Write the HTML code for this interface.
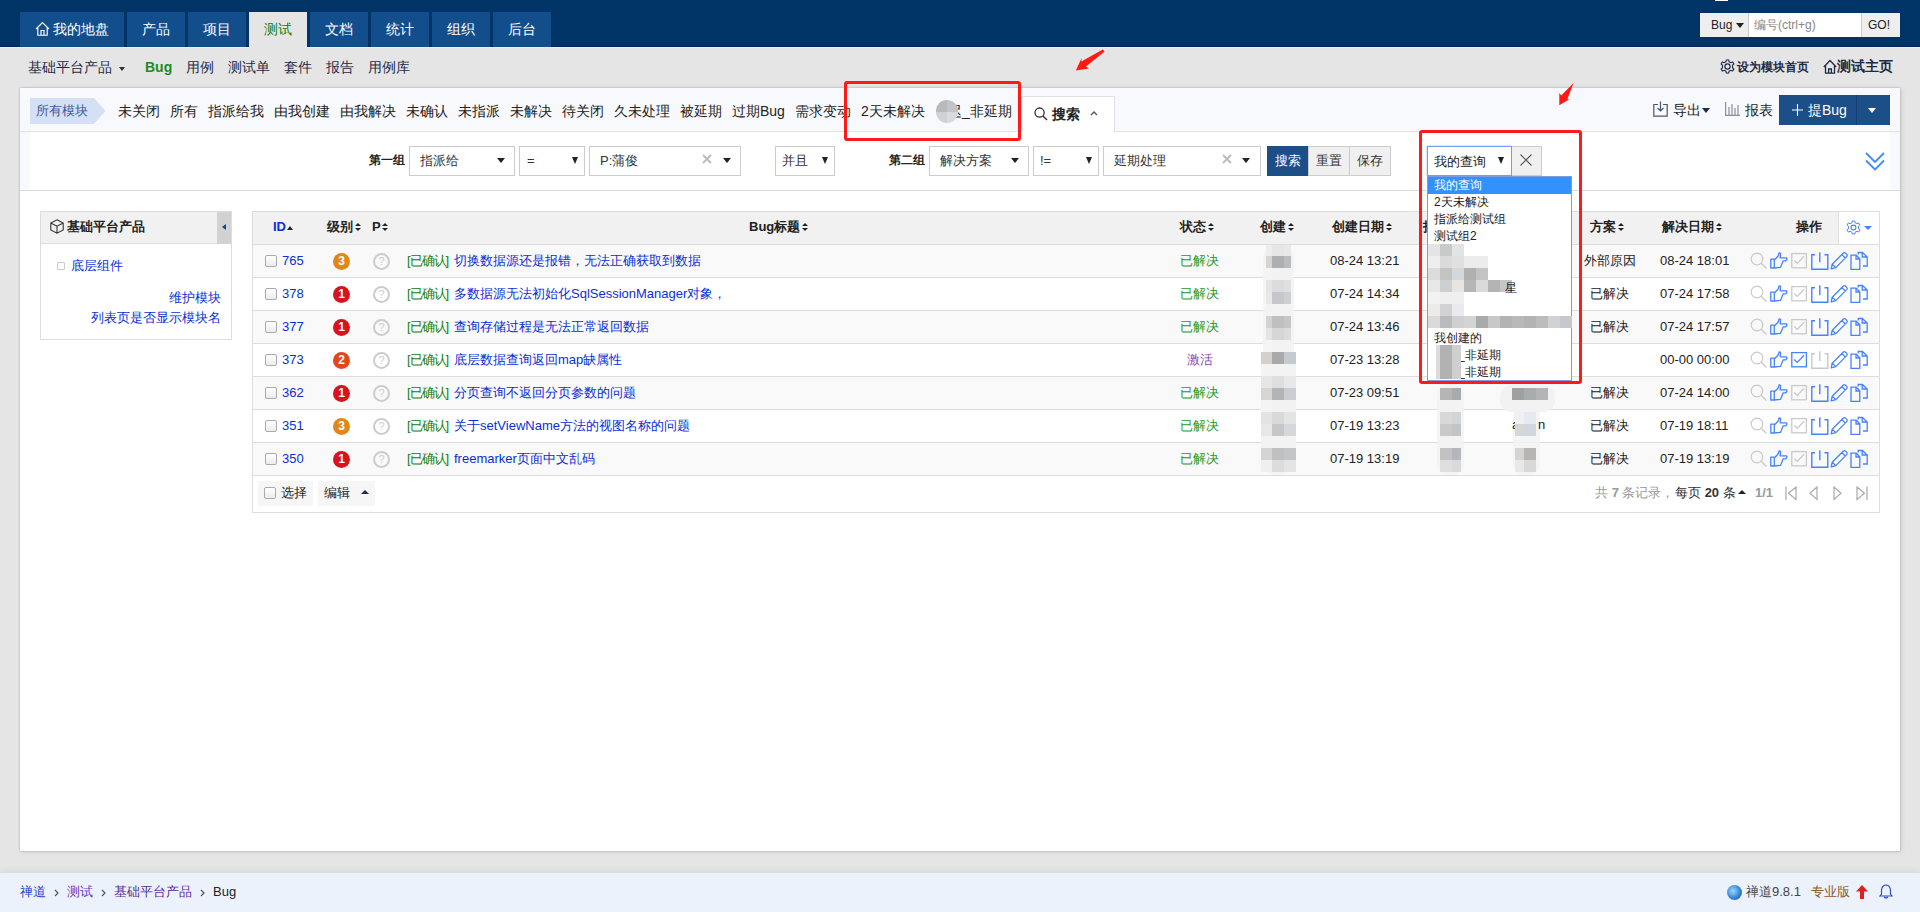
<!DOCTYPE html><html><head><meta charset="utf-8"><title>Bug</title><style>
*{box-sizing:border-box;margin:0;padding:0}
html,body{width:1920px;height:912px;overflow:hidden}
body{position:relative;background:#e5e5e5;font-family:"Liberation Sans",sans-serif;font-size:13px;color:#333;line-height:1}
.a{position:absolute;white-space:nowrap}
svg{position:absolute;overflow:visible}
#hdr{position:absolute;left:0;top:0;width:1920px;height:47px;background:#003366}
.tab{position:absolute;top:12px;height:35px;width:58px;background:#134e8c;color:#fff;font-size:14px;line-height:35px;text-align:center}
.tab.on{background:#e5e5e5;color:#127c12}
.sub{font-size:14px;line-height:16px;top:59px;color:#1e2a44}
#panel{position:absolute;left:20px;top:88px;width:1880px;height:763px;background:#fff;box-shadow:0 0 2px rgba(0,0,0,.3),2px 1px 5px rgba(0,0,0,.07)}
#fbar{position:absolute;left:0;top:0;width:1880px;height:44px;background:#f8f9fd;border-bottom:1px solid #e1e1e1}
#sform{position:absolute;left:0;top:44px;width:1880px;height:59px;background:#f8f9fd;border-bottom:1px solid #dcdcdc}
#sform .in{position:absolute;left:10px;top:0;width:1860px;height:58px;background:#fff}
.flt{font-size:14px;line-height:16px;top:103px;color:#222}
.sel{position:absolute;top:146px;height:30px;border:1px solid #ccc;background:#fff;font-size:13px;line-height:27px;color:#333;padding-left:10px}
.car{position:absolute;width:0;height:0;border-left:5px solid transparent;border-right:5px solid transparent;border-top:5px solid #222}
.lbl{font-size:12px;line-height:16px;top:152px;font-weight:bold;color:#222}
.btn{position:absolute;top:146px;height:30px;font-size:13px;line-height:28px;text-align:center;border:1px solid #ccc;background:#f0f0f0;color:#333}
#ftr{position:absolute;left:0;top:873px;width:1920px;height:39px;background:#ecf2fc;box-shadow:0 -2px 6px rgba(0,0,0,.06)}
.th{font-size:13px;line-height:16px;font-weight:bold;color:#222}
.td{font-size:13px;line-height:16px;color:#333}
.row{position:absolute;left:253px;width:1626px;height:33px;border-bottom:1px solid #ddd}
.cb{position:absolute;width:12px;height:12px;border:1px solid #aaa;border-radius:2px;background:linear-gradient(#fff,#ececec)}
.sev{position:absolute;width:17px;height:17px;border-radius:50%;color:#fff;font-size:12px;font-weight:bold;line-height:17px;text-align:center}
.pq{position:absolute;width:17px;height:17px;border-radius:50%;border:2px solid #ccc;color:#ccc;font-size:11px;line-height:13px;text-align:center}
.blk{position:absolute;background:#c8c8c8}
.red{position:absolute;border:3px solid #ff1a1a;border-radius:3px}
</style></head><body>
<div id="hdr">
<div class="a" style="left:0;top:46px;width:1920px;height:1px;background:#00265c"></div>
<div class="tab" style="left:20px;width:104px;text-align:left;padding-left:33px">我的地盘</div>
<svg style="left:35px;top:21px" width="15" height="15" viewBox="0 0 15 15"><path d="M1 8 L7.5 1.5 L14 8 M2.8 6.5 V14.2 H12.2 V6.5 M6 14.2 V9.5 H9 V14.2" fill="none" stroke="#fff" stroke-width="1.15"/></svg>
<div class="tab" style="left:127px">产品</div>
<div class="tab" style="left:188px">项目</div>
<div class="tab on" style="left:249px">测试</div>
<div class="tab" style="left:310px">文档</div>
<div class="tab" style="left:371px">统计</div>
<div class="tab" style="left:432px">组织</div>
<div class="tab" style="left:493px">后台</div>
<div class="a" style="left:1700px;top:13px;width:200px;height:24px;background:#fff"></div>
<div class="a" style="left:1700px;top:13px;width:49px;height:24px;background:#eee;border-right:1px solid #ccc;font-size:12px;line-height:24px;color:#222;padding-left:11px">Bug</div>
<div class="car" style="left:1736px;top:23px;border-left-width:4px;border-right-width:4px;border-top-width:5px"></div>
<div class="a" style="left:1754px;top:13px;font-size:12px;line-height:24px;color:#888">编号(ctrl+g)</div>
<div class="a" style="left:1861px;top:13px;width:39px;height:24px;background:#eee;border-left:1px solid #ccc;font-size:12px;line-height:24px;color:#222;padding-left:6px">GO!</div>
<div class="a" style="left:1715px;top:0;width:13px;height:1px;background:#fff"></div>
</div>
<div class="a" style="left:0;top:47px;width:249px;height:1px;background:#f0eeeb"></div><div class="a" style="left:307px;top:47px;width:1613px;height:1px;background:#f0eeeb"></div>
<div class="a sub" style="left:28px">基础平台产品</div>
<div class="a sub" style="left:186px">用例</div>
<div class="a sub" style="left:228px">测试单</div>
<div class="a sub" style="left:284px">套件</div>
<div class="a sub" style="left:326px">报告</div>
<div class="a sub" style="left:368px">用例库</div>
<div class="car" style="left:119px;top:67px;border-left-width:3.5px;border-right-width:3.5px;border-top-width:4px;border-top-color:#333"></div>
<div class="a sub" style="left:145px;color:#1e8c1e;font-weight:bold;font-size:14px">Bug</div>
<svg style="left:1720px;top:59px" width="15" height="15" viewBox="0 0 15 15"><circle cx="7.5" cy="7.5" r="2.6" fill="none" stroke="#1e2a44" stroke-width="1.2"/><path d="M6.3 1 H8.7 L9.1 2.8 L10.9 3.7 L12.6 2.9 L13.9 4.9 L12.5 6.3 V8.7 L13.9 10.1 L12.6 12.1 L10.9 11.3 L9.1 12.2 L8.7 14 H6.3 L5.9 12.2 L4.1 11.3 L2.4 12.1 L1.1 10.1 L2.5 8.7 V6.3 L1.1 4.9 L2.4 2.9 L4.1 3.7 L5.9 2.8 Z" fill="none" stroke="#1e2a44" stroke-width="1.1"/></svg>
<div class="a sub" style="left:1737px;font-size:12px;font-weight:bold">设为模块首页</div>
<svg style="left:1823px;top:59px" width="14" height="15" viewBox="0 0 14 15"><path d="M0.8 8 L7 1.5 L13.2 8 M2.5 6.5 V14.2 H11.5 V6.5 M5.6 14.2 V10 H8.4 V14.2" fill="none" stroke="#1e2a44" stroke-width="1.3"/></svg>
<div class="a sub" style="left:1837px;font-size:13.5px;font-weight:bold">测试主页</div>
<div id="panel"><div id="fbar"></div><div id="sform"><div class="in"></div></div></div>
<svg style="left:30px;top:98px" width="76" height="26" viewBox="0 0 76 26"><path d="M0 0 H64 L75.5 13 L64 26 H0 Z" fill="#d4e0f6"/></svg>
<div class="a" style="left:36px;top:103px;font-size:13px;line-height:16px;color:#3b5998">所有模块</div>
<div class="a flt" style="left:118px">未关闭</div>
<div class="a flt" style="left:170px">所有</div>
<div class="a flt" style="left:208px">指派给我</div>
<div class="a flt" style="left:274px">由我创建</div>
<div class="a flt" style="left:340px">由我解决</div>
<div class="a flt" style="left:406px">未确认</div>
<div class="a flt" style="left:458px">未指派</div>
<div class="a flt" style="left:510px">未解决</div>
<div class="a flt" style="left:562px">待关闭</div>
<div class="a flt" style="left:614px">久未处理</div>
<div class="a flt" style="left:680px">被延期</div>
<div class="a flt" style="left:732px">过期Bug</div>
<div class="a flt" style="left:795px">需求变动</div>
<div class="a flt" style="left:861px">2天未解决</div>
<div class="a flt" style="left:948px">迟_非延期</div>
<div class="a" style="left:936px;top:100px;width:22px;height:23px;border-radius:11px;overflow:hidden;filter:blur(0.4px)"><div class="a" style="left:0;top:0;width:11px;height:12px;background:#b9b9b9"></div><div class="a" style="left:11px;top:0;width:11px;height:12px;background:#c4c4c6"></div><div class="a" style="left:0;top:12px;width:11px;height:11px;background:#cfd1d3"></div><div class="a" style="left:11px;top:12px;width:11px;height:11px;background:#d9d9dc"></div></div>
<div class="a" style="left:1021px;top:96px;width:94px;height:36px;background:#fff;border:1px solid #e1e1e1;border-bottom:none"></div>
<svg style="left:1034px;top:107px" width="14" height="14" viewBox="0 0 14 14"><circle cx="5.6" cy="5.6" r="4.6" fill="none" stroke="#333" stroke-width="1.3"/><path d="M9 9 L13 13" stroke="#333" stroke-width="1.4"/></svg>
<div class="a" style="left:1052px;top:106px;font-size:14px;line-height:16px;font-weight:bold;color:#222">搜索</div>
<svg style="left:1090px;top:110px" width="8" height="6" viewBox="0 0 8 6"><path d="M1 5 L4 2 L7 5" fill="none" stroke="#555" stroke-width="1.4"/></svg>
<svg style="left:1653px;top:101px" width="15" height="16" viewBox="0 0 15 16"><path d="M5 3.5 H0.8 V15.2 H14.2 V3.5 H10 M7.5 0.5 V10 M4.5 7 L7.5 10 L10.5 7" fill="none" stroke="#4a5670" stroke-width="1.2"/></svg>
<div class="a" style="left:1673px;top:102px;font-size:14px;line-height:16px;color:#222">导出</div>
<div class="car" style="left:1702px;top:108px;border-left-width:4px;border-right-width:4px;border-top-width:5px;border-top-color:#1e2a50"></div>
<svg style="left:1725px;top:102px" width="15" height="14" viewBox="0 0 15 14"><path d="M0.6 0 V13.4 H15 M4 5 V13 M7 2 V13 M10 6 V13 M13 3 V13" fill="none" stroke="#8a8fa0" stroke-width="1.2"/></svg>
<div class="a" style="left:1745px;top:102px;font-size:14px;line-height:16px;color:#222">报表</div>
<div class="a" style="left:1779px;top:95px;width:111px;height:30px;background:#1c4e87"></div>
<div class="a" style="left:1856px;top:95px;width:1px;height:30px;background:#143e70"></div>
<svg style="left:1792px;top:104px" width="11" height="12" viewBox="0 0 11 12"><path d="M5.5 0 V12 M0 6 H11" stroke="#fff" stroke-width="1.1"/></svg>
<div class="a" style="left:1808px;top:102px;font-size:14px;line-height:16px;color:#fff">提Bug</div>
<div class="car" style="left:1868px;top:108px;border-left-width:4.5px;border-right-width:4.5px;border-top-width:5px;border-top-color:#fff"></div>
<div class="a lbl" style="left:369px">第一组</div>
<div class="sel" style="left:409px;width:106px">指派给</div><div class="car" style="left:497px;top:158px;border-left-width:4.5px;border-right-width:4.5px;border-top-width:5px"></div>
<div class="sel" style="left:519px;width:66px;padding-left:7px">=</div><div class="car" style="left:572px;top:157px;border-left-width:3.5px;border-right-width:3.5px;border-top-width:7px"></div>
<div class="sel" style="left:589px;width:152px">P:蒲俊</div>
<svg style="left:702px;top:154px" width="10" height="10" viewBox="0 0 10 10"><path d="M1 1 L9 9 M9 1 L1 9" stroke="#bbb" stroke-width="1.8"/></svg>
<div class="car" style="left:723px;top:158px;border-left-width:4.5px;border-right-width:4.5px;border-top-width:5px"></div>
<div class="sel" style="left:775px;width:60px;padding-left:6px">并且</div><div class="car" style="left:822px;top:157px;border-left-width:3.5px;border-right-width:3.5px;border-top-width:7px"></div>
<div class="a lbl" style="left:889px">第二组</div>
<div class="sel" style="left:929px;width:100px">解决方案</div><div class="car" style="left:1011px;top:158px;border-left-width:4.5px;border-right-width:4.5px;border-top-width:5px"></div>
<div class="sel" style="left:1033px;width:66px;padding-left:6px">!=</div><div class="car" style="left:1086px;top:157px;border-left-width:3.5px;border-right-width:3.5px;border-top-width:7px"></div>
<div class="sel" style="left:1103px;width:158px">延期处理</div>
<svg style="left:1222px;top:154px" width="10" height="10" viewBox="0 0 10 10"><path d="M1 1 L9 9 M9 1 L1 9" stroke="#bbb" stroke-width="1.8"/></svg>
<div class="car" style="left:1242px;top:158px;border-left-width:4.5px;border-right-width:4.5px;border-top-width:5px"></div>
<div class="btn" style="left:1267px;width:41px;background:#1c4e87;border-color:#1c4e87;color:#fff">搜索</div>
<div class="btn" style="left:1308px;width:42px">重置</div>
<div class="btn" style="left:1349px;width:42px">保存</div>
<svg style="left:1865px;top:152px" width="20" height="19" viewBox="0 0 20 19"><path d="M1 1 L10 10 L19 1 M1 8.5 L10 17.5 L19 8.5" fill="none" stroke="#3d8bff" stroke-width="1.8"/></svg>
<div class="a" style="left:40px;top:211px;width:192px;height:129px;border:1px solid #ddd;background:#fff"></div>
<div class="a" style="left:41px;top:212px;width:190px;height:32px;background:#f1f1f1;border-bottom:1px solid #ddd"></div>
<div class="a" style="left:217px;top:212px;width:14px;height:32px;background:#d2d2d2"></div>
<div class="car" style="left:222px;top:224px;border:none;border-top:3.5px solid transparent;border-bottom:3.5px solid transparent;border-right:4px solid #1f3aa0"></div>
<svg style="left:50px;top:219px" width="14" height="15" viewBox="0 0 14 15"><path d="M7 0.8 L13.2 4 V11 L7 14.2 L0.8 11 V4 Z M0.8 4 L7 7.2 L13.2 4 M7 7.2 V14.2" fill="none" stroke="#333" stroke-width="1.1"/></svg>
<div class="a th" style="left:67px;top:219px">基础平台产品</div>
<div class="a" style="left:57px;top:262px;width:8px;height:8px;border:1px solid #ccc;border-radius:1px"></div>
<div class="a td" style="left:71px;top:258px;color:#0a2ed6">底层组件</div>
<div class="a td" style="left:169px;top:290px;color:#0a2ed6">维护模块</div>
<div class="a td" style="left:91px;top:310px;color:#0a2ed6">列表页是否显示模块名</div>
<div class="a" style="left:252px;top:211px;width:1628px;height:302px;border:1px solid #ddd;background:#fff"></div>
<div class="a" style="left:253px;top:212px;width:1585px;height:32px;background:#f1f1f1"></div>
<div class="a" style="left:1838px;top:212px;width:1px;height:32px;background:#ddd"></div>
<div class="a" style="left:253px;top:244px;width:1626px;height:1px;background:#ddd"></div>
<div class="a th" style="left:273px;top:219px;color:#0a2ed6">ID</div><div class="car" style="left:287px;top:226px;border:none;border-left:3px solid transparent;border-right:3px solid transparent;border-bottom:4px solid #222"></div>
<div class="a th" style="left:327px;top:219px">级别</div><div class="car" style="left:355px;top:223px;border:none;border-left:3px solid transparent;border-right:3px solid transparent;border-bottom:3.5px solid #222"></div><div class="car" style="left:355px;top:228px;border:none;border-left:3px solid transparent;border-right:3px solid transparent;border-top:3.5px solid #222"></div>
<div class="a th" style="left:372px;top:219px">P</div><div class="car" style="left:382px;top:223px;border:none;border-left:3px solid transparent;border-right:3px solid transparent;border-bottom:3.5px solid #222"></div><div class="car" style="left:382px;top:228px;border:none;border-left:3px solid transparent;border-right:3px solid transparent;border-top:3.5px solid #222"></div>
<div class="a th" style="left:749px;top:219px">Bug标题</div><div class="car" style="left:802px;top:223px;border:none;border-left:3px solid transparent;border-right:3px solid transparent;border-bottom:3.5px solid #222"></div><div class="car" style="left:802px;top:228px;border:none;border-left:3px solid transparent;border-right:3px solid transparent;border-top:3.5px solid #222"></div>
<div class="a th" style="left:1180px;top:219px">状态</div><div class="car" style="left:1208px;top:223px;border:none;border-left:3px solid transparent;border-right:3px solid transparent;border-bottom:3.5px solid #222"></div><div class="car" style="left:1208px;top:228px;border:none;border-left:3px solid transparent;border-right:3px solid transparent;border-top:3.5px solid #222"></div>
<div class="a th" style="left:1260px;top:219px">创建</div><div class="car" style="left:1288px;top:223px;border:none;border-left:3px solid transparent;border-right:3px solid transparent;border-bottom:3.5px solid #222"></div><div class="car" style="left:1288px;top:228px;border:none;border-left:3px solid transparent;border-right:3px solid transparent;border-top:3.5px solid #222"></div>
<div class="a th" style="left:1332px;top:219px">创建日期</div><div class="car" style="left:1386px;top:223px;border:none;border-left:3px solid transparent;border-right:3px solid transparent;border-bottom:3.5px solid #222"></div><div class="car" style="left:1386px;top:228px;border:none;border-left:3px solid transparent;border-right:3px solid transparent;border-top:3.5px solid #222"></div>
<div class="a th" style="left:1423px;top:219px">指派</div>
<div class="a th" style="left:1590px;top:219px">方案</div><div class="car" style="left:1618px;top:223px;border:none;border-left:3px solid transparent;border-right:3px solid transparent;border-bottom:3.5px solid #222"></div><div class="car" style="left:1618px;top:228px;border:none;border-left:3px solid transparent;border-right:3px solid transparent;border-top:3.5px solid #222"></div>
<div class="a th" style="left:1662px;top:219px">解决日期</div><div class="car" style="left:1716px;top:223px;border:none;border-left:3px solid transparent;border-right:3px solid transparent;border-bottom:3.5px solid #222"></div><div class="car" style="left:1716px;top:228px;border:none;border-left:3px solid transparent;border-right:3px solid transparent;border-top:3.5px solid #222"></div>
<div class="a th" style="left:1796px;top:219px">操作</div>
<svg style="left:1846px;top:220px" width="15" height="15" viewBox="0 0 15 15"><circle cx="7.5" cy="7.5" r="2.4" fill="none" stroke="#4682fa" stroke-width="1.1"/><path d="M6.3 1 H8.7 L9.1 2.8 L10.9 3.7 L12.6 2.9 L13.9 4.9 L12.5 6.3 V8.7 L13.9 10.1 L12.6 12.1 L10.9 11.3 L9.1 12.2 L8.7 14 H6.3 L5.9 12.2 L4.1 11.3 L2.4 12.1 L1.1 10.1 L2.5 8.7 V6.3 L1.1 4.9 L2.4 2.9 L4.1 3.7 L5.9 2.8 Z" fill="none" stroke="#4682fa" stroke-width="1"/></svg>
<div class="car" style="left:1864px;top:226px;border-left-width:4px;border-right-width:4px;border-top-width:4px;border-top-color:#4682fa"></div>
<div class="a" style="left:253px;top:245px;width:1626px;height:32px;background:#f9f9f9"></div>
<div class="a" style="left:253px;top:277px;width:1626px;height:1px;background:#ddd"></div>
<div class="cb" style="left:265px;top:255px"></div>
<div class="a td" style="left:282px;top:253px;color:#0a2ed6">765</div>
<div class="sev" style="left:333px;top:253px;background:#e0861a">3</div>
<div class="pq" style="left:373px;top:253px">?</div>
<div class="a td" style="left:407px;top:253px;color:#0f800f;letter-spacing:-1px">[已确认]</div>
<div class="a td" style="left:454px;top:253px;color:#0a2ed6">切换数据源还是报错，无法正确获取到数据</div>
<div class="a td" style="left:1180px;top:253px;color:#1f9a1f">已解决</div>
<div class="a td" style="left:1330px;top:253px;color:#222">08-24 13:21</div>
<div class="a td" style="left:1584px;top:253px;color:#222">外部原因</div>
<div class="a td" style="left:1660px;top:253px;color:#222">08-24 18:01</div>
<svg style="left:1750px;top:252px" width="18" height="18" viewBox="0 0 18 18"><circle cx="7" cy="7" r="5.8" fill="none" stroke="#c9c9c9" stroke-width="1.2"/><path d="M11.2 11.2 L16.5 16.5" stroke="#c9c9c9" stroke-width="1.3"/></svg><svg style="left:1770px;top:252px" width="18" height="18" viewBox="0 0 18 18"><path d="M0.8 7.2 H4.3 V16 H0.8 Z M4.3 8 L8 4.2 L9.2 0.8 L10.6 1.4 L10.2 5.8 H16.5 L17 7.2 L15.8 8.8 H13.2 L12.2 11.2 L11.4 13.2 L10.4 15.4 L4.3 16" fill="none" stroke="#4682fa" stroke-width="1.3" stroke-linejoin="round"/></svg><svg style="left:1791px;top:252px" width="17" height="17" viewBox="0 0 17 17"><rect x="0.8" y="1.6" width="14.6" height="14.2" fill="none" stroke="#c9c9c9" stroke-width="1.3"/><path d="M3.2 8.5 L6.3 11.4 L13 4.2" fill="none" stroke="#c9c9c9" stroke-width="1.3"/></svg><svg style="left:1811px;top:252px" width="18" height="18" viewBox="0 0 18 18"><path d="M4 2.8 H0.8 V17.2 H16.8 V2.8 H13.5 M8.8 0.2 V10.2" fill="none" stroke="#4682fa" stroke-width="1.4"/></svg><svg style="left:1830px;top:252px" width="18" height="18" viewBox="0 0 18 18"><path d="M1.2 16.8 L2.2 12.2 L13.4 1 Q14.4 0.3 15.6 1.2 L16.8 2.4 Q17.6 3.4 16.9 4.4 L5.8 15.6 Z M2.2 12.2 L5.8 15.6 M11.8 2.6 L15.3 6" fill="none" stroke="#4682fa" stroke-width="1.3" stroke-linejoin="round"/></svg><svg style="left:1850px;top:252px" width="18" height="18" viewBox="0 0 18 18"><path d="M1 3.2 H6.2 L9.8 6.8 V17.4 H1 Z M6 3.2 V7 H9.8 M8.2 2.6 V0.5 H12.4 L17.2 5 V14 H13 M12.2 0.5 V5 H17.2" fill="none" stroke="#4682fa" stroke-width="1.3"/></svg>
<div class="a" style="left:253px;top:278px;width:1626px;height:32px;background:#fff"></div>
<div class="a" style="left:253px;top:310px;width:1626px;height:1px;background:#ddd"></div>
<div class="cb" style="left:265px;top:288px"></div>
<div class="a td" style="left:282px;top:286px;color:#0a2ed6">378</div>
<div class="sev" style="left:333px;top:286px;background:#d9131e">1</div>
<div class="pq" style="left:373px;top:286px">?</div>
<div class="a td" style="left:407px;top:286px;color:#0f800f;letter-spacing:-1px">[已确认]</div>
<div class="a td" style="left:454px;top:286px;color:#0a2ed6">多数据源无法初始化SqlSessionManager对象，</div>
<div class="a td" style="left:1180px;top:286px;color:#1f9a1f">已解决</div>
<div class="a td" style="left:1330px;top:286px;color:#222">07-24 14:34</div>
<div class="a td" style="left:1590px;top:286px;color:#222">已解决</div>
<div class="a td" style="left:1660px;top:286px;color:#222">07-24 17:58</div>
<svg style="left:1750px;top:285px" width="18" height="18" viewBox="0 0 18 18"><circle cx="7" cy="7" r="5.8" fill="none" stroke="#c9c9c9" stroke-width="1.2"/><path d="M11.2 11.2 L16.5 16.5" stroke="#c9c9c9" stroke-width="1.3"/></svg><svg style="left:1770px;top:285px" width="18" height="18" viewBox="0 0 18 18"><path d="M0.8 7.2 H4.3 V16 H0.8 Z M4.3 8 L8 4.2 L9.2 0.8 L10.6 1.4 L10.2 5.8 H16.5 L17 7.2 L15.8 8.8 H13.2 L12.2 11.2 L11.4 13.2 L10.4 15.4 L4.3 16" fill="none" stroke="#4682fa" stroke-width="1.3" stroke-linejoin="round"/></svg><svg style="left:1791px;top:285px" width="17" height="17" viewBox="0 0 17 17"><rect x="0.8" y="1.6" width="14.6" height="14.2" fill="none" stroke="#c9c9c9" stroke-width="1.3"/><path d="M3.2 8.5 L6.3 11.4 L13 4.2" fill="none" stroke="#c9c9c9" stroke-width="1.3"/></svg><svg style="left:1811px;top:285px" width="18" height="18" viewBox="0 0 18 18"><path d="M4 2.8 H0.8 V17.2 H16.8 V2.8 H13.5 M8.8 0.2 V10.2" fill="none" stroke="#4682fa" stroke-width="1.4"/></svg><svg style="left:1830px;top:285px" width="18" height="18" viewBox="0 0 18 18"><path d="M1.2 16.8 L2.2 12.2 L13.4 1 Q14.4 0.3 15.6 1.2 L16.8 2.4 Q17.6 3.4 16.9 4.4 L5.8 15.6 Z M2.2 12.2 L5.8 15.6 M11.8 2.6 L15.3 6" fill="none" stroke="#4682fa" stroke-width="1.3" stroke-linejoin="round"/></svg><svg style="left:1850px;top:285px" width="18" height="18" viewBox="0 0 18 18"><path d="M1 3.2 H6.2 L9.8 6.8 V17.4 H1 Z M6 3.2 V7 H9.8 M8.2 2.6 V0.5 H12.4 L17.2 5 V14 H13 M12.2 0.5 V5 H17.2" fill="none" stroke="#4682fa" stroke-width="1.3"/></svg>
<div class="a" style="left:253px;top:311px;width:1626px;height:32px;background:#f9f9f9"></div>
<div class="a" style="left:253px;top:343px;width:1626px;height:1px;background:#ddd"></div>
<div class="cb" style="left:265px;top:321px"></div>
<div class="a td" style="left:282px;top:319px;color:#0a2ed6">377</div>
<div class="sev" style="left:333px;top:319px;background:#d9131e">1</div>
<div class="pq" style="left:373px;top:319px">?</div>
<div class="a td" style="left:407px;top:319px;color:#0f800f;letter-spacing:-1px">[已确认]</div>
<div class="a td" style="left:454px;top:319px;color:#0a2ed6">查询存储过程是无法正常返回数据</div>
<div class="a td" style="left:1180px;top:319px;color:#1f9a1f">已解决</div>
<div class="a td" style="left:1330px;top:319px;color:#222">07-24 13:46</div>
<div class="a td" style="left:1590px;top:319px;color:#222">已解决</div>
<div class="a td" style="left:1660px;top:319px;color:#222">07-24 17:57</div>
<svg style="left:1750px;top:318px" width="18" height="18" viewBox="0 0 18 18"><circle cx="7" cy="7" r="5.8" fill="none" stroke="#c9c9c9" stroke-width="1.2"/><path d="M11.2 11.2 L16.5 16.5" stroke="#c9c9c9" stroke-width="1.3"/></svg><svg style="left:1770px;top:318px" width="18" height="18" viewBox="0 0 18 18"><path d="M0.8 7.2 H4.3 V16 H0.8 Z M4.3 8 L8 4.2 L9.2 0.8 L10.6 1.4 L10.2 5.8 H16.5 L17 7.2 L15.8 8.8 H13.2 L12.2 11.2 L11.4 13.2 L10.4 15.4 L4.3 16" fill="none" stroke="#4682fa" stroke-width="1.3" stroke-linejoin="round"/></svg><svg style="left:1791px;top:318px" width="17" height="17" viewBox="0 0 17 17"><rect x="0.8" y="1.6" width="14.6" height="14.2" fill="none" stroke="#c9c9c9" stroke-width="1.3"/><path d="M3.2 8.5 L6.3 11.4 L13 4.2" fill="none" stroke="#c9c9c9" stroke-width="1.3"/></svg><svg style="left:1811px;top:318px" width="18" height="18" viewBox="0 0 18 18"><path d="M4 2.8 H0.8 V17.2 H16.8 V2.8 H13.5 M8.8 0.2 V10.2" fill="none" stroke="#4682fa" stroke-width="1.4"/></svg><svg style="left:1830px;top:318px" width="18" height="18" viewBox="0 0 18 18"><path d="M1.2 16.8 L2.2 12.2 L13.4 1 Q14.4 0.3 15.6 1.2 L16.8 2.4 Q17.6 3.4 16.9 4.4 L5.8 15.6 Z M2.2 12.2 L5.8 15.6 M11.8 2.6 L15.3 6" fill="none" stroke="#4682fa" stroke-width="1.3" stroke-linejoin="round"/></svg><svg style="left:1850px;top:318px" width="18" height="18" viewBox="0 0 18 18"><path d="M1 3.2 H6.2 L9.8 6.8 V17.4 H1 Z M6 3.2 V7 H9.8 M8.2 2.6 V0.5 H12.4 L17.2 5 V14 H13 M12.2 0.5 V5 H17.2" fill="none" stroke="#4682fa" stroke-width="1.3"/></svg>
<div class="a" style="left:253px;top:344px;width:1626px;height:32px;background:#fff"></div>
<div class="a" style="left:253px;top:376px;width:1626px;height:1px;background:#ddd"></div>
<div class="cb" style="left:265px;top:354px"></div>
<div class="a td" style="left:282px;top:352px;color:#0a2ed6">373</div>
<div class="sev" style="left:333px;top:352px;background:#e2461b">2</div>
<div class="pq" style="left:373px;top:352px">?</div>
<div class="a td" style="left:407px;top:352px;color:#0f800f;letter-spacing:-1px">[已确认]</div>
<div class="a td" style="left:454px;top:352px;color:#0a2ed6">底层数据查询返回map缺属性</div>
<div class="a td" style="left:1187px;top:352px;color:#9048b0">激活</div>
<div class="a td" style="left:1330px;top:352px;color:#222">07-23 13:28</div>
<div class="a td" style="left:1660px;top:352px;color:#222">00-00 00:00</div>
<svg style="left:1750px;top:351px" width="18" height="18" viewBox="0 0 18 18"><circle cx="7" cy="7" r="5.8" fill="none" stroke="#c9c9c9" stroke-width="1.2"/><path d="M11.2 11.2 L16.5 16.5" stroke="#c9c9c9" stroke-width="1.3"/></svg><svg style="left:1770px;top:351px" width="18" height="18" viewBox="0 0 18 18"><path d="M0.8 7.2 H4.3 V16 H0.8 Z M4.3 8 L8 4.2 L9.2 0.8 L10.6 1.4 L10.2 5.8 H16.5 L17 7.2 L15.8 8.8 H13.2 L12.2 11.2 L11.4 13.2 L10.4 15.4 L4.3 16" fill="none" stroke="#4682fa" stroke-width="1.3" stroke-linejoin="round"/></svg><svg style="left:1791px;top:351px" width="17" height="17" viewBox="0 0 17 17"><rect x="0.8" y="1.6" width="14.6" height="14.2" fill="none" stroke="#4682fa" stroke-width="1.3"/><path d="M3.2 8.5 L6.3 11.4 L13 4.2" fill="none" stroke="#4682fa" stroke-width="1.3"/></svg><svg style="left:1811px;top:351px" width="18" height="18" viewBox="0 0 18 18"><path d="M4 2.8 H0.8 V17.2 H16.8 V2.8 H13.5 M8.8 0.2 V10.2" fill="none" stroke="#c9c9c9" stroke-width="1.4"/></svg><svg style="left:1830px;top:351px" width="18" height="18" viewBox="0 0 18 18"><path d="M1.2 16.8 L2.2 12.2 L13.4 1 Q14.4 0.3 15.6 1.2 L16.8 2.4 Q17.6 3.4 16.9 4.4 L5.8 15.6 Z M2.2 12.2 L5.8 15.6 M11.8 2.6 L15.3 6" fill="none" stroke="#4682fa" stroke-width="1.3" stroke-linejoin="round"/></svg><svg style="left:1850px;top:351px" width="18" height="18" viewBox="0 0 18 18"><path d="M1 3.2 H6.2 L9.8 6.8 V17.4 H1 Z M6 3.2 V7 H9.8 M8.2 2.6 V0.5 H12.4 L17.2 5 V14 H13 M12.2 0.5 V5 H17.2" fill="none" stroke="#4682fa" stroke-width="1.3"/></svg>
<div class="a" style="left:253px;top:377px;width:1626px;height:32px;background:#f9f9f9"></div>
<div class="a" style="left:253px;top:409px;width:1626px;height:1px;background:#ddd"></div>
<div class="cb" style="left:265px;top:387px"></div>
<div class="a td" style="left:282px;top:385px;color:#0a2ed6">362</div>
<div class="sev" style="left:333px;top:385px;background:#d9131e">1</div>
<div class="pq" style="left:373px;top:385px">?</div>
<div class="a td" style="left:407px;top:385px;color:#0f800f;letter-spacing:-1px">[已确认]</div>
<div class="a td" style="left:454px;top:385px;color:#0a2ed6">分页查询不返回分页参数的问题</div>
<div class="a td" style="left:1180px;top:385px;color:#1f9a1f">已解决</div>
<div class="a td" style="left:1330px;top:385px;color:#222">07-23 09:51</div>
<div class="a td" style="left:1590px;top:385px;color:#222">已解决</div>
<div class="a td" style="left:1660px;top:385px;color:#222">07-24 14:00</div>
<svg style="left:1750px;top:384px" width="18" height="18" viewBox="0 0 18 18"><circle cx="7" cy="7" r="5.8" fill="none" stroke="#c9c9c9" stroke-width="1.2"/><path d="M11.2 11.2 L16.5 16.5" stroke="#c9c9c9" stroke-width="1.3"/></svg><svg style="left:1770px;top:384px" width="18" height="18" viewBox="0 0 18 18"><path d="M0.8 7.2 H4.3 V16 H0.8 Z M4.3 8 L8 4.2 L9.2 0.8 L10.6 1.4 L10.2 5.8 H16.5 L17 7.2 L15.8 8.8 H13.2 L12.2 11.2 L11.4 13.2 L10.4 15.4 L4.3 16" fill="none" stroke="#4682fa" stroke-width="1.3" stroke-linejoin="round"/></svg><svg style="left:1791px;top:384px" width="17" height="17" viewBox="0 0 17 17"><rect x="0.8" y="1.6" width="14.6" height="14.2" fill="none" stroke="#c9c9c9" stroke-width="1.3"/><path d="M3.2 8.5 L6.3 11.4 L13 4.2" fill="none" stroke="#c9c9c9" stroke-width="1.3"/></svg><svg style="left:1811px;top:384px" width="18" height="18" viewBox="0 0 18 18"><path d="M4 2.8 H0.8 V17.2 H16.8 V2.8 H13.5 M8.8 0.2 V10.2" fill="none" stroke="#4682fa" stroke-width="1.4"/></svg><svg style="left:1830px;top:384px" width="18" height="18" viewBox="0 0 18 18"><path d="M1.2 16.8 L2.2 12.2 L13.4 1 Q14.4 0.3 15.6 1.2 L16.8 2.4 Q17.6 3.4 16.9 4.4 L5.8 15.6 Z M2.2 12.2 L5.8 15.6 M11.8 2.6 L15.3 6" fill="none" stroke="#4682fa" stroke-width="1.3" stroke-linejoin="round"/></svg><svg style="left:1850px;top:384px" width="18" height="18" viewBox="0 0 18 18"><path d="M1 3.2 H6.2 L9.8 6.8 V17.4 H1 Z M6 3.2 V7 H9.8 M8.2 2.6 V0.5 H12.4 L17.2 5 V14 H13 M12.2 0.5 V5 H17.2" fill="none" stroke="#4682fa" stroke-width="1.3"/></svg>
<div class="a" style="left:253px;top:410px;width:1626px;height:32px;background:#fff"></div>
<div class="a" style="left:253px;top:442px;width:1626px;height:1px;background:#ddd"></div>
<div class="cb" style="left:265px;top:420px"></div>
<div class="a td" style="left:282px;top:418px;color:#0a2ed6">351</div>
<div class="sev" style="left:333px;top:418px;background:#e0861a">3</div>
<div class="pq" style="left:373px;top:418px">?</div>
<div class="a td" style="left:407px;top:418px;color:#0f800f;letter-spacing:-1px">[已确认]</div>
<div class="a td" style="left:454px;top:418px;color:#0a2ed6">关于setViewName方法的视图名称的问题</div>
<div class="a td" style="left:1180px;top:418px;color:#1f9a1f">已解决</div>
<div class="a td" style="left:1330px;top:418px;color:#222">07-19 13:23</div>
<div class="a td" style="left:1590px;top:418px;color:#222">已解决</div>
<div class="a td" style="left:1660px;top:418px;color:#222">07-19 18:11</div>
<svg style="left:1750px;top:417px" width="18" height="18" viewBox="0 0 18 18"><circle cx="7" cy="7" r="5.8" fill="none" stroke="#c9c9c9" stroke-width="1.2"/><path d="M11.2 11.2 L16.5 16.5" stroke="#c9c9c9" stroke-width="1.3"/></svg><svg style="left:1770px;top:417px" width="18" height="18" viewBox="0 0 18 18"><path d="M0.8 7.2 H4.3 V16 H0.8 Z M4.3 8 L8 4.2 L9.2 0.8 L10.6 1.4 L10.2 5.8 H16.5 L17 7.2 L15.8 8.8 H13.2 L12.2 11.2 L11.4 13.2 L10.4 15.4 L4.3 16" fill="none" stroke="#4682fa" stroke-width="1.3" stroke-linejoin="round"/></svg><svg style="left:1791px;top:417px" width="17" height="17" viewBox="0 0 17 17"><rect x="0.8" y="1.6" width="14.6" height="14.2" fill="none" stroke="#c9c9c9" stroke-width="1.3"/><path d="M3.2 8.5 L6.3 11.4 L13 4.2" fill="none" stroke="#c9c9c9" stroke-width="1.3"/></svg><svg style="left:1811px;top:417px" width="18" height="18" viewBox="0 0 18 18"><path d="M4 2.8 H0.8 V17.2 H16.8 V2.8 H13.5 M8.8 0.2 V10.2" fill="none" stroke="#4682fa" stroke-width="1.4"/></svg><svg style="left:1830px;top:417px" width="18" height="18" viewBox="0 0 18 18"><path d="M1.2 16.8 L2.2 12.2 L13.4 1 Q14.4 0.3 15.6 1.2 L16.8 2.4 Q17.6 3.4 16.9 4.4 L5.8 15.6 Z M2.2 12.2 L5.8 15.6 M11.8 2.6 L15.3 6" fill="none" stroke="#4682fa" stroke-width="1.3" stroke-linejoin="round"/></svg><svg style="left:1850px;top:417px" width="18" height="18" viewBox="0 0 18 18"><path d="M1 3.2 H6.2 L9.8 6.8 V17.4 H1 Z M6 3.2 V7 H9.8 M8.2 2.6 V0.5 H12.4 L17.2 5 V14 H13 M12.2 0.5 V5 H17.2" fill="none" stroke="#4682fa" stroke-width="1.3"/></svg>
<div class="a" style="left:253px;top:443px;width:1626px;height:32px;background:#f9f9f9"></div>
<div class="a" style="left:253px;top:475px;width:1626px;height:1px;background:#ddd"></div>
<div class="cb" style="left:265px;top:453px"></div>
<div class="a td" style="left:282px;top:451px;color:#0a2ed6">350</div>
<div class="sev" style="left:333px;top:451px;background:#d9131e">1</div>
<div class="pq" style="left:373px;top:451px">?</div>
<div class="a td" style="left:407px;top:451px;color:#0f800f;letter-spacing:-1px">[已确认]</div>
<div class="a td" style="left:454px;top:451px;color:#0a2ed6">freemarker页面中文乱码</div>
<div class="a td" style="left:1180px;top:451px;color:#1f9a1f">已解决</div>
<div class="a td" style="left:1330px;top:451px;color:#222">07-19 13:19</div>
<div class="a td" style="left:1590px;top:451px;color:#222">已解决</div>
<div class="a td" style="left:1660px;top:451px;color:#222">07-19 13:19</div>
<svg style="left:1750px;top:450px" width="18" height="18" viewBox="0 0 18 18"><circle cx="7" cy="7" r="5.8" fill="none" stroke="#c9c9c9" stroke-width="1.2"/><path d="M11.2 11.2 L16.5 16.5" stroke="#c9c9c9" stroke-width="1.3"/></svg><svg style="left:1770px;top:450px" width="18" height="18" viewBox="0 0 18 18"><path d="M0.8 7.2 H4.3 V16 H0.8 Z M4.3 8 L8 4.2 L9.2 0.8 L10.6 1.4 L10.2 5.8 H16.5 L17 7.2 L15.8 8.8 H13.2 L12.2 11.2 L11.4 13.2 L10.4 15.4 L4.3 16" fill="none" stroke="#4682fa" stroke-width="1.3" stroke-linejoin="round"/></svg><svg style="left:1791px;top:450px" width="17" height="17" viewBox="0 0 17 17"><rect x="0.8" y="1.6" width="14.6" height="14.2" fill="none" stroke="#c9c9c9" stroke-width="1.3"/><path d="M3.2 8.5 L6.3 11.4 L13 4.2" fill="none" stroke="#c9c9c9" stroke-width="1.3"/></svg><svg style="left:1811px;top:450px" width="18" height="18" viewBox="0 0 18 18"><path d="M4 2.8 H0.8 V17.2 H16.8 V2.8 H13.5 M8.8 0.2 V10.2" fill="none" stroke="#4682fa" stroke-width="1.4"/></svg><svg style="left:1830px;top:450px" width="18" height="18" viewBox="0 0 18 18"><path d="M1.2 16.8 L2.2 12.2 L13.4 1 Q14.4 0.3 15.6 1.2 L16.8 2.4 Q17.6 3.4 16.9 4.4 L5.8 15.6 Z M2.2 12.2 L5.8 15.6 M11.8 2.6 L15.3 6" fill="none" stroke="#4682fa" stroke-width="1.3" stroke-linejoin="round"/></svg><svg style="left:1850px;top:450px" width="18" height="18" viewBox="0 0 18 18"><path d="M1 3.2 H6.2 L9.8 6.8 V17.4 H1 Z M6 3.2 V7 H9.8 M8.2 2.6 V0.5 H12.4 L17.2 5 V14 H13 M12.2 0.5 V5 H17.2" fill="none" stroke="#4682fa" stroke-width="1.3"/></svg>
<div class="a" style="left:258px;top:481px;width:55px;height:25px;background:#f6f6f6"></div>
<div class="cb" style="left:264px;top:487px"></div>
<div class="a td" style="left:281px;top:485px;color:#222">选择</div>
<div class="a" style="left:318px;top:481px;width:57px;height:25px;background:#f6f6f6"></div>
<div class="a td" style="left:324px;top:485px;color:#222">编辑</div>
<div class="car" style="left:361px;top:490px;border:none;border-left:4px solid transparent;border-right:4px solid transparent;border-bottom:4px solid #1e2a50"></div>
<div class="a td" style="left:1595px;top:485px;color:#999">共 <b>7</b> 条记录，</div>
<div class="a td" style="left:1675px;top:485px;color:#333">每页 <b>20</b> 条</div>
<div class="car" style="left:1738px;top:490px;border:none;border-left:4px solid transparent;border-right:4px solid transparent;border-bottom:4px solid #222"></div>
<div class="a td" style="left:1755px;top:485px;color:#999;font-weight:bold">1/1</div>
<svg style="left:1785px;top:486px" width="84" height="15" viewBox="0 0 84 15"><path d="M1 0.5 V14 M11 1 L3.5 7.2 L11 13.5 Z M32 1 L25 7.2 L32 13.5 Z M49 1 L56 7.2 L49 13.5 Z M72 1 L79.5 7.2 L72 13.5 Z M82 0.5 V14" fill="none" stroke="#aaa" stroke-width="1.2"/></svg>
<div class="a" style="left:1427px;top:146px;width:85px;height:30px;border:1px solid #6ea0ef;box-shadow:0 0 2px rgba(80,140,240,.6);background:#fff"></div>
<div class="a" style="left:1434px;top:154px;font-size:12.5px;line-height:16px;color:#222">我的查询</div>
<div class="car" style="left:1498px;top:157px;border-left-width:3.5px;border-right-width:3.5px;border-top-width:7px"></div>
<div class="a" style="left:1512px;top:146px;width:30px;height:30px;border:1px solid #ccc;border-left:none;background:#f0f0f0"></div>
<svg style="left:1520px;top:154px" width="12" height="12" viewBox="0 0 12 12"><path d="M0.5 0.5 L11.5 11.5 M11.5 0.5 L0.5 11.5" stroke="#555" stroke-width="1.1"/></svg>
<div class="a" style="left:1427px;top:176px;width:145px;height:205px;border:1px solid #7a9ce0;background:#fff"></div>
<div class="a" style="left:1428px;top:177px;width:143px;height:17px;background:#3390ff"></div>
<div class="a" style="left:1434px;top:177px;font-size:12px;line-height:17px;color:#fff">我的查询</div>
<div class="a" style="left:1434px;top:194px;font-size:12px;line-height:17px;color:#222">2天未解决</div>
<div class="a" style="left:1434px;top:211px;font-size:12px;line-height:17px;color:#222">指派给测试组</div>
<div class="a" style="left:1434px;top:228px;font-size:12px;line-height:17px;color:#222">测试组2</div>
<div class="a" style="left:1434px;top:330px;font-size:12px;line-height:17px;color:#222">我创建的</div>
<div class="a" style="left:1458px;top:347px;font-size:12px;line-height:17px;color:#222">_非延期</div>
<div class="a" style="left:1458px;top:364px;font-size:12px;line-height:17px;color:#222">_非延期</div>
<div class="blk" style="left:1263px;top:245px;width:31px;height:230px;background:#f3f3f3;border-radius:14px;opacity:.8"></div>
<div class="blk" style="left:1266px;top:245px;width:6px;height:12px;background:#eeeeee;"></div>
<div class="blk" style="left:1272px;top:245px;width:12px;height:12px;background:#e6e6e6;"></div>
<div class="blk" style="left:1284px;top:245px;width:7px;height:12px;background:#e8e8e8;"></div>
<div class="blk" style="left:1266px;top:256px;width:6px;height:12px;background:#d8d4d0;"></div>
<div class="blk" style="left:1272px;top:256px;width:12px;height:12px;background:#aeafb2;"></div>
<div class="blk" style="left:1284px;top:256px;width:7px;height:12px;background:#b9bcc0;"></div>
<div class="blk" style="left:1266px;top:268px;width:6px;height:12px;background:#f4f4f4;"></div>
<div class="blk" style="left:1272px;top:268px;width:12px;height:12px;background:#f2f2f2;"></div>
<div class="blk" style="left:1284px;top:268px;width:7px;height:12px;background:#f2f2f2;"></div>
<div class="blk" style="left:1266px;top:280px;width:6px;height:12px;background:#e5e5e5;"></div>
<div class="blk" style="left:1272px;top:280px;width:12px;height:12px;background:#dcdcdc;"></div>
<div class="blk" style="left:1284px;top:280px;width:7px;height:12px;background:#e0e0e0;"></div>
<div class="blk" style="left:1266px;top:292px;width:6px;height:12px;background:#e8e8e8;"></div>
<div class="blk" style="left:1272px;top:292px;width:12px;height:12px;background:#c6c7ca;"></div>
<div class="blk" style="left:1284px;top:292px;width:7px;height:12px;background:#cdd0d3;"></div>
<div class="blk" style="left:1266px;top:304px;width:6px;height:12px;background:#f3f3f3;"></div>
<div class="blk" style="left:1272px;top:304px;width:12px;height:12px;background:#f3f3f3;"></div>
<div class="blk" style="left:1284px;top:304px;width:7px;height:12px;background:#f3f3f3;"></div>
<div class="blk" style="left:1266px;top:316px;width:6px;height:12px;background:#d2d2d2;"></div>
<div class="blk" style="left:1272px;top:316px;width:12px;height:12px;background:#bfbfbf;"></div>
<div class="blk" style="left:1284px;top:316px;width:7px;height:12px;background:#c5c6c8;"></div>
<div class="blk" style="left:1266px;top:328px;width:6px;height:12px;background:#e4e4e4;"></div>
<div class="blk" style="left:1272px;top:328px;width:12px;height:12px;background:#d6d6d6;"></div>
<div class="blk" style="left:1284px;top:328px;width:7px;height:12px;background:#dcdcdc;"></div>
<div class="blk" style="left:1266px;top:340px;width:6px;height:12px;background:#f5f5f5;"></div>
<div class="blk" style="left:1272px;top:340px;width:12px;height:12px;background:#f3f3f3;"></div>
<div class="blk" style="left:1284px;top:340px;width:7px;height:12px;background:#f3f3f3;"></div>
<div class="blk" style="left:1261px;top:352px;width:11px;height:12px;background:#d5d0cc;"></div>
<div class="blk" style="left:1272px;top:352px;width:12px;height:12px;background:#a9a9ab;"></div>
<div class="blk" style="left:1284px;top:352px;width:12px;height:12px;background:#c4cad0;"></div>
<div class="blk" style="left:1261px;top:364px;width:11px;height:12px;background:#f3f3f3;"></div>
<div class="blk" style="left:1272px;top:364px;width:12px;height:12px;background:#f3f3f3;"></div>
<div class="blk" style="left:1284px;top:364px;width:12px;height:12px;background:#f3f3f3;"></div>
<div class="blk" style="left:1261px;top:376px;width:11px;height:12px;background:#e6e6e6;"></div>
<div class="blk" style="left:1272px;top:376px;width:12px;height:12px;background:#dedede;"></div>
<div class="blk" style="left:1284px;top:376px;width:12px;height:12px;background:#e6e8ea;"></div>
<div class="blk" style="left:1261px;top:388px;width:11px;height:12px;background:#d8d4d2;"></div>
<div class="blk" style="left:1272px;top:388px;width:12px;height:12px;background:#b3b4b6;"></div>
<div class="blk" style="left:1284px;top:388px;width:12px;height:12px;background:#c9cdd1;"></div>
<div class="blk" style="left:1261px;top:400px;width:11px;height:12px;background:#f4f4f4;"></div>
<div class="blk" style="left:1272px;top:400px;width:12px;height:12px;background:#f2f2f2;"></div>
<div class="blk" style="left:1284px;top:400px;width:12px;height:12px;background:#f2f2f2;"></div>
<div class="blk" style="left:1261px;top:412px;width:11px;height:12px;background:#e3e3e3;"></div>
<div class="blk" style="left:1272px;top:412px;width:12px;height:12px;background:#d9d9d9;"></div>
<div class="blk" style="left:1284px;top:412px;width:12px;height:12px;background:#e4e4e4;"></div>
<div class="blk" style="left:1261px;top:424px;width:11px;height:12px;background:#e8e7e5;"></div>
<div class="blk" style="left:1272px;top:424px;width:12px;height:12px;background:#c7c7c9;"></div>
<div class="blk" style="left:1284px;top:424px;width:12px;height:12px;background:#d5d8da;"></div>
<div class="blk" style="left:1261px;top:436px;width:11px;height:12px;background:#f3f3f3;"></div>
<div class="blk" style="left:1272px;top:436px;width:12px;height:12px;background:#f3f3f3;"></div>
<div class="blk" style="left:1284px;top:436px;width:12px;height:12px;background:#f3f3f3;"></div>
<div class="blk" style="left:1261px;top:448px;width:11px;height:12px;background:#d4d4d4;"></div>
<div class="blk" style="left:1272px;top:448px;width:12px;height:12px;background:#c0c0c0;"></div>
<div class="blk" style="left:1284px;top:448px;width:12px;height:12px;background:#c4c5c9;"></div>
<div class="blk" style="left:1261px;top:460px;width:11px;height:12px;background:#efefef;"></div>
<div class="blk" style="left:1272px;top:460px;width:12px;height:12px;background:#dcdcdc;"></div>
<div class="blk" style="left:1284px;top:460px;width:12px;height:12px;background:#e4e4e4;"></div>
<div class="blk" style="left:1440px;top:244px;width:12px;height:12px;background:#c8c9c9;"></div>
<div class="blk" style="left:1428px;top:244px;width:12px;height:12px;background:#e4e4e4;"></div>
<div class="blk" style="left:1452px;top:244px;width:12px;height:12px;background:#e2e3e4;"></div>
<div class="blk" style="left:1428px;top:256px;width:12px;height:12px;background:#eeeeee;"></div>
<div class="blk" style="left:1440px;top:256px;width:12px;height:12px;background:#dadada;"></div>
<div class="blk" style="left:1452px;top:256px;width:12px;height:12px;background:#e0e0e0;"></div>
<div class="blk" style="left:1464px;top:256px;width:12px;height:12px;background:#ececec;"></div>
<div class="blk" style="left:1476px;top:256px;width:12px;height:12px;background:#ececec;"></div>
<div class="blk" style="left:1428px;top:268px;width:12px;height:12px;background:#dcdcdc;"></div>
<div class="blk" style="left:1440px;top:268px;width:12px;height:12px;background:#c3c4c2;"></div>
<div class="blk" style="left:1452px;top:268px;width:12px;height:12px;background:#d5d8da;"></div>
<div class="blk" style="left:1464px;top:268px;width:12px;height:12px;background:#b0b0b0;"></div>
<div class="blk" style="left:1476px;top:268px;width:12px;height:12px;background:#c4c3c3;"></div>
<div class="blk" style="left:1428px;top:280px;width:12px;height:12px;background:#e8e6e6;"></div>
<div class="blk" style="left:1440px;top:280px;width:12px;height:12px;background:#cdd0d1;"></div>
<div class="blk" style="left:1452px;top:280px;width:12px;height:12px;background:#e8e4e0;"></div>
<div class="blk" style="left:1464px;top:280px;width:12px;height:12px;background:#b5b6b8;"></div>
<div class="blk" style="left:1476px;top:280px;width:12px;height:12px;background:#d9dadb;"></div>
<div class="blk" style="left:1488px;top:280px;width:12px;height:12px;background:#b4b4b4;"></div>
<div class="blk" style="left:1500px;top:280px;width:12px;height:12px;background:#c6c6c6;"></div>
<div class="blk" style="left:1428px;top:292px;width:12px;height:12px;background:#f2f2f2;"></div>
<div class="blk" style="left:1440px;top:292px;width:12px;height:12px;background:#efefef;"></div>
<div class="blk" style="left:1452px;top:292px;width:12px;height:12px;background:#efefef;"></div>
<div class="blk" style="left:1428px;top:304px;width:12px;height:12px;background:#ecebe9;"></div>
<div class="blk" style="left:1440px;top:304px;width:12px;height:12px;background:#d2d2d2;"></div>
<div class="blk" style="left:1452px;top:304px;width:12px;height:12px;background:#e8eaee;"></div>
<div class="blk" style="left:1428px;top:316px;width:12px;height:12px;background:#dadada;"></div>
<div class="blk" style="left:1440px;top:316px;width:12px;height:12px;background:#b8babb;"></div>
<div class="blk" style="left:1452px;top:316px;width:12px;height:12px;background:#d0d0d0;"></div>
<div class="blk" style="left:1464px;top:316px;width:12px;height:12px;background:#d4d4d4;"></div>
<div class="blk" style="left:1476px;top:316px;width:12px;height:12px;background:#a9abab;"></div>
<div class="blk" style="left:1488px;top:316px;width:12px;height:12px;background:#c9c8c8;"></div>
<div class="blk" style="left:1500px;top:316px;width:12px;height:12px;background:#b3b3b3;"></div>
<div class="blk" style="left:1512px;top:316px;width:12px;height:12px;background:#b9b9b7;"></div>
<div class="blk" style="left:1524px;top:316px;width:12px;height:12px;background:#b2b4b3;"></div>
<div class="blk" style="left:1536px;top:316px;width:12px;height:12px;background:#bcbcba;"></div>
<div class="blk" style="left:1548px;top:316px;width:12px;height:12px;background:#d2d2d2;"></div>
<div class="blk" style="left:1560px;top:316px;width:12px;height:12px;background:#c6c8cf;"></div>
<div class="a td" style="left:1505px;top:280px;font-size:12px;color:#222">星</div>
<div class="blk" style="left:1440px;top:345px;width:12px;height:34px;background:#b2b2b2;"></div>
<div class="blk" style="left:1452px;top:345px;width:9px;height:34px;background:#cfcfcf;"></div>
<div class="blk" style="left:1436px;top:345px;width:4px;height:34px;background:#dcdcdc;"></div>
<div class="blk" style="left:1437px;top:384px;width:27px;height:91px;background:#f3f3f3;border-radius:12px;opacity:.8"></div>
<div class="blk" style="left:1513px;top:405px;width:27px;height:70px;background:#f3f3f3;border-radius:12px;opacity:.8"></div>
<div class="blk" style="left:1440px;top:388px;width:12px;height:12px;background:#b5b5b5;"></div>
<div class="blk" style="left:1452px;top:388px;width:9px;height:12px;background:#a8abad;"></div>
<div class="blk" style="left:1440px;top:400px;width:12px;height:12px;background:#f3f3f3;"></div>
<div class="blk" style="left:1452px;top:400px;width:9px;height:12px;background:#f3f3f3;"></div>
<div class="blk" style="left:1440px;top:412px;width:12px;height:12px;background:#d8d8d8;"></div>
<div class="blk" style="left:1452px;top:412px;width:9px;height:12px;background:#d2d4d6;"></div>
<div class="blk" style="left:1440px;top:424px;width:12px;height:12px;background:#c9c9c9;"></div>
<div class="blk" style="left:1452px;top:424px;width:9px;height:12px;background:#c2c5c8;"></div>
<div class="blk" style="left:1440px;top:436px;width:12px;height:12px;background:#f3f3f3;"></div>
<div class="blk" style="left:1452px;top:436px;width:9px;height:12px;background:#f3f3f3;"></div>
<div class="blk" style="left:1440px;top:448px;width:12px;height:12px;background:#c2c2c2;"></div>
<div class="blk" style="left:1452px;top:448px;width:9px;height:12px;background:#b4b6b9;"></div>
<div class="blk" style="left:1440px;top:460px;width:12px;height:12px;background:#dedede;"></div>
<div class="blk" style="left:1452px;top:460px;width:9px;height:12px;background:#d8dadc;"></div>
<div class="blk" style="left:1500px;top:385px;width:55px;height:27px;background:#f2f2f2;border-radius:12px"></div>
<div class="blk" style="left:1512px;top:388px;width:12px;height:12px;background:#9fa1a0;"></div>
<div class="blk" style="left:1524px;top:388px;width:12px;height:12px;background:#a9acad;"></div>
<div class="blk" style="left:1536px;top:388px;width:12px;height:12px;background:#b4b4b6;"></div>
<div class="a td" style="left:1512px;top:417px;color:#222">a</div><div class="a td" style="left:1538px;top:417px;color:#222">n</div>
<div class="blk" style="left:1515px;top:412px;width:9px;height:12px;background:#f0f0f0;"></div>
<div class="blk" style="left:1524px;top:412px;width:12px;height:12px;background:#e6eaee;"></div>
<div class="blk" style="left:1515px;top:424px;width:9px;height:12px;background:#d8d6d4;"></div>
<div class="blk" style="left:1524px;top:424px;width:12px;height:12px;background:#cfd6de;"></div>
<div class="blk" style="left:1515px;top:448px;width:9px;height:12px;background:#d4d4d4;"></div>
<div class="blk" style="left:1524px;top:448px;width:12px;height:12px;background:#b8b4b2;"></div>
<div class="blk" style="left:1515px;top:460px;width:9px;height:12px;background:#e8e8e8;"></div>
<div class="blk" style="left:1524px;top:460px;width:12px;height:12px;background:#d8d8d8;"></div>
<div class="red" style="left:844px;top:81px;width:177px;height:60px"></div>
<div class="red" style="left:1419px;top:130px;width:163px;height:254px"></div>
<svg style="left:0;top:0" width="1920" height="912"><path d="M1102.8 49.6 L1081.3 61.6 L1081.5 58.2 L1075.8 70.5 L1089 68.5 L1086 66.6 L1104.6 51.4 Z" fill="#ff1a14"/><path d="M1573.6 83 L1561.2 95.4 L1559.3 93 L1559.3 105.3 L1569.3 99.3 L1567.4 98.9 Z" fill="#ff1a14"/></svg>
<div id="ftr"></div>
<div class="a" style="left:20px;top:884px;font-size:13px;line-height:16px;color:#2a3bd0">禅道</div>
<div class="a" style="left:67px;top:884px;font-size:13px;line-height:16px;color:#6a3fc0">测试</div>
<div class="a" style="left:114px;top:884px;font-size:13px;line-height:16px;color:#5a2a9a">基础平台产品</div>
<div class="a" style="left:213px;top:884px;font-size:13px;line-height:16px;color:#222">Bug</div>
<svg style="left:54px;top:889px" width="5" height="8" viewBox="0 0 5 8"><path d="M1 1 L4 4 L1 7" fill="none" stroke="#555" stroke-width="1.2"/></svg>
<svg style="left:101px;top:889px" width="5" height="8" viewBox="0 0 5 8"><path d="M1 1 L4 4 L1 7" fill="none" stroke="#555" stroke-width="1.2"/></svg>
<svg style="left:200px;top:889px" width="5" height="8" viewBox="0 0 5 8"><path d="M1 1 L4 4 L1 7" fill="none" stroke="#555" stroke-width="1.2"/></svg>
<div class="a" style="left:1727px;top:885px;width:15px;height:15px;border-radius:50%;background:radial-gradient(circle at 40% 40%,#9fd8ff,#2b7fd0 60%,#1a5aa0)"></div>
<div class="a" style="left:1746px;top:884px;font-size:13px;line-height:16px;color:#444">禅道9.8.1</div>
<div class="a" style="left:1811px;top:884px;font-size:13px;line-height:16px;color:#8a5a2a">专业版</div>
<svg style="left:1856px;top:885px" width="12" height="14" viewBox="0 0 12 14"><path d="M6 0 L12 6.5 H8 V14 H4 V6.5 H0 Z" fill="#e02020"/></svg>
<svg style="left:1879px;top:884px" width="14" height="15" viewBox="0 0 14 15"><path d="M7 1 Q11.5 1.5 11.5 6.5 V10 L13 12 H1 L2.5 10 V6.5 Q2.5 1.5 7 1 Z M5.2 13 Q7 15 8.8 13" fill="none" stroke="#2a50d0" stroke-width="1.2"/></svg>
</body></html>
